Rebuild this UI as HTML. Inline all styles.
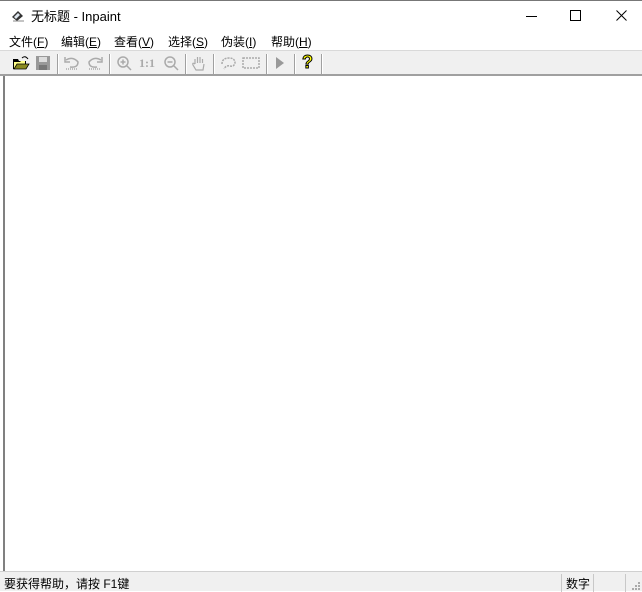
<!DOCTYPE html>
<html><head><meta charset="utf-8"><style>
*{margin:0;padding:0;box-sizing:border-box}
body{width:642px;height:591px;overflow:hidden;background:#fff;font-family:"Liberation Sans","Noto Sans CJK SC",sans-serif;position:relative}
.title{position:absolute;left:0;top:0;width:642px;height:31px;background:#fff;border-top:1px solid #777}
.title .t{position:absolute;left:31px;top:5px;font-size:13px;color:#000}
.menu{position:absolute;top:32px;left:0;height:18px;font-size:12px;color:#000}
.menu span{position:absolute;top:1px;white-space:nowrap}
.menu u{text-decoration:underline}
.tb{position:absolute;top:50px;left:0;width:642px;height:26px;background:#f0f0f0;border-top:1px solid #d9d9d9;border-bottom:2px solid #a0a0a0}
.tb .sep{position:absolute;top:3px;width:2px;height:20px;border-left:1px solid #a0a0a0;border-right:1px solid #fff}
.tb svg{position:absolute;top:4px}
.client{position:absolute;top:76px;left:3px;width:639px;height:495px;background:#fff;border-left:2px solid #808080}
.status{position:absolute;top:571px;left:0;width:642px;height:20px;background:#f0f0f0;border-top:1px solid #d0d0d0;font-size:12px}
.status .s1{position:absolute;left:4px;top:3px}
.status .s2{position:absolute;left:566px;top:3px}
.status .d{position:absolute;top:2px;width:1px;height:18px;background:#c8c8c8}
</style></head><body>
<div class="title">
<svg style="position:absolute;left:10px;top:8px" width="16" height="14" viewBox="0 0 16 14"><path d="M2 8 L8 2 L13 7 L7 12 Z" fill="#333"/><path d="M4 8 L8 4 L10 6 L6 10Z" fill="#e0e8f0"/><path d="M3 12 H14" stroke="#888"/></svg>
<div class="t">无标题 - Inpaint</div>
<svg style="position:absolute;left:526px;top:15px" width="12" height="2"><path d="M0 0.5H11" stroke="#000"/></svg>
<svg style="position:absolute;left:570px;top:9px" width="12" height="12"><rect x="0.5" y="0.5" width="10" height="10" fill="none" stroke="#000"/></svg>
<svg style="position:absolute;left:616px;top:9px" width="12" height="12"><path d="M0.5 0.5L10.5 10.5M10.5 0.5L0.5 10.5" stroke="#000"/></svg>
</div>
<div class="menu">
<span style="left:9px">文件(<u>F</u>)</span>
<span style="left:61px">编辑(<u>E</u>)</span>
<span style="left:114px">查看(<u>V</u>)</span>
<span style="left:168px">选择(<u>S</u>)</span>
<span style="left:221px">伪装(<u>I</u>)</span>
<span style="left:271px">帮助(<u>H</u>)</span>
</div>
<div class="tb">
<svg style="left:12px" width="18" height="16"><path d="M1 4h5l1 2h7v8H1z" fill="#000"/><path d="M2 7h6l1-1h4v7H2z" fill="#ff8"/><path d="M2 14L5 9h12l-3 5z" fill="#8a8a20" stroke="#000" stroke-width=".8"/><path d="M10 3 q3-3 6 1" stroke="#000" fill="none"/></svg>
<svg style="left:35px" width="16" height="16"><rect x="1" y="1" width="14" height="14" fill="#999"/><rect x="4" y="2" width="8" height="5" fill="#ddd"/><rect x="4" y="10" width="8" height="5" fill="#777"/></svg>
<div class="sep" style="left:57px"></div>
<svg style="left:63px" width="18" height="16" fill="none" stroke="#aaa" stroke-width="1.5"><path d="M3 5 q7-4 12 2 q0 6-8 5"/><path d="M2 2v5h5"/><path d="M3 14h12" stroke-dasharray="1 1"/></svg>
<svg style="left:86px" width="18" height="16" fill="none" stroke="#aaa" stroke-width="1.5"><path d="M15 5 q-7-4-12 2 q0 6 8 5"/><path d="M16 2v5h-5"/><path d="M3 14h12" stroke-dasharray="1 1"/></svg>
<div class="sep" style="left:109px"></div>
<svg style="left:116px" width="16" height="16" fill="none" stroke="#aaa" stroke-width="1.5"><circle cx="7" cy="7" r="5"/><path d="M11 11l4 4M4.5 7h5M7 4.5v5"/></svg>
<div style="position:absolute;left:139px;top:5px;font:bold 12px 'Liberation Serif',serif;color:#aaa">1:1</div>
<svg style="left:163px" width="16" height="16" fill="none" stroke="#aaa" stroke-width="1.5"><circle cx="7" cy="7" r="5"/><path d="M11 11l4 4M4.5 7h5"/></svg>
<div class="sep" style="left:185px"></div>
<svg style="left:191px" width="16" height="16" fill="none" stroke="#aaa" stroke-width="1.2"><path d="M4 9V4M6.5 8V2M9 8V2M11.5 8V4M4 9q-3-2-2 1l3 5h7l1-6"/></svg>
<div class="sep" style="left:213px"></div>
<svg style="left:219px" width="18" height="16" fill="none" stroke="#aaa" stroke-width="1.5" stroke-dasharray="2 1"><path d="M3 9q0-6 7-6q6 0 6 5q-1 4-5 3q-4-1-6 3"/></svg>
<svg style="left:242px" width="18" height="16" fill="none" stroke="#aaa" stroke-width="1.5" stroke-dasharray="2 1"><rect x="1" y="3" width="16" height="10"/></svg>
<div class="sep" style="left:266px"></div>
<svg style="left:274px" width="12" height="16"><path d="M2 2l8 6-8 6z" fill="#999"/></svg>
<div class="sep" style="left:294px"></div>
<div style="position:absolute;left:302px;top:1px;font:bold 18px 'Liberation Sans',sans-serif;color:#ff0;-webkit-text-stroke:1px #000">?</div>
<div class="sep" style="left:321px"></div>
</div>
<div class="client"></div>
<div class="status">
<div class="s1">要获得帮助，请按 F1键</div>
<div class="d" style="left:561px"></div>
<div class="s2">数字</div>
<div class="d" style="left:593px"></div>
<div class="d" style="left:625px"></div>
<svg style="position:absolute;left:632px;top:10px" width="10" height="10" fill="#aaa"><rect x="6" y="0" width="2" height="2"/><rect x="3" y="3" width="2" height="2"/><rect x="6" y="3" width="2" height="2"/><rect x="0" y="6" width="2" height="2"/><rect x="3" y="6" width="2" height="2"/><rect x="6" y="6" width="2" height="2"/></svg>
</div>
</body></html>
